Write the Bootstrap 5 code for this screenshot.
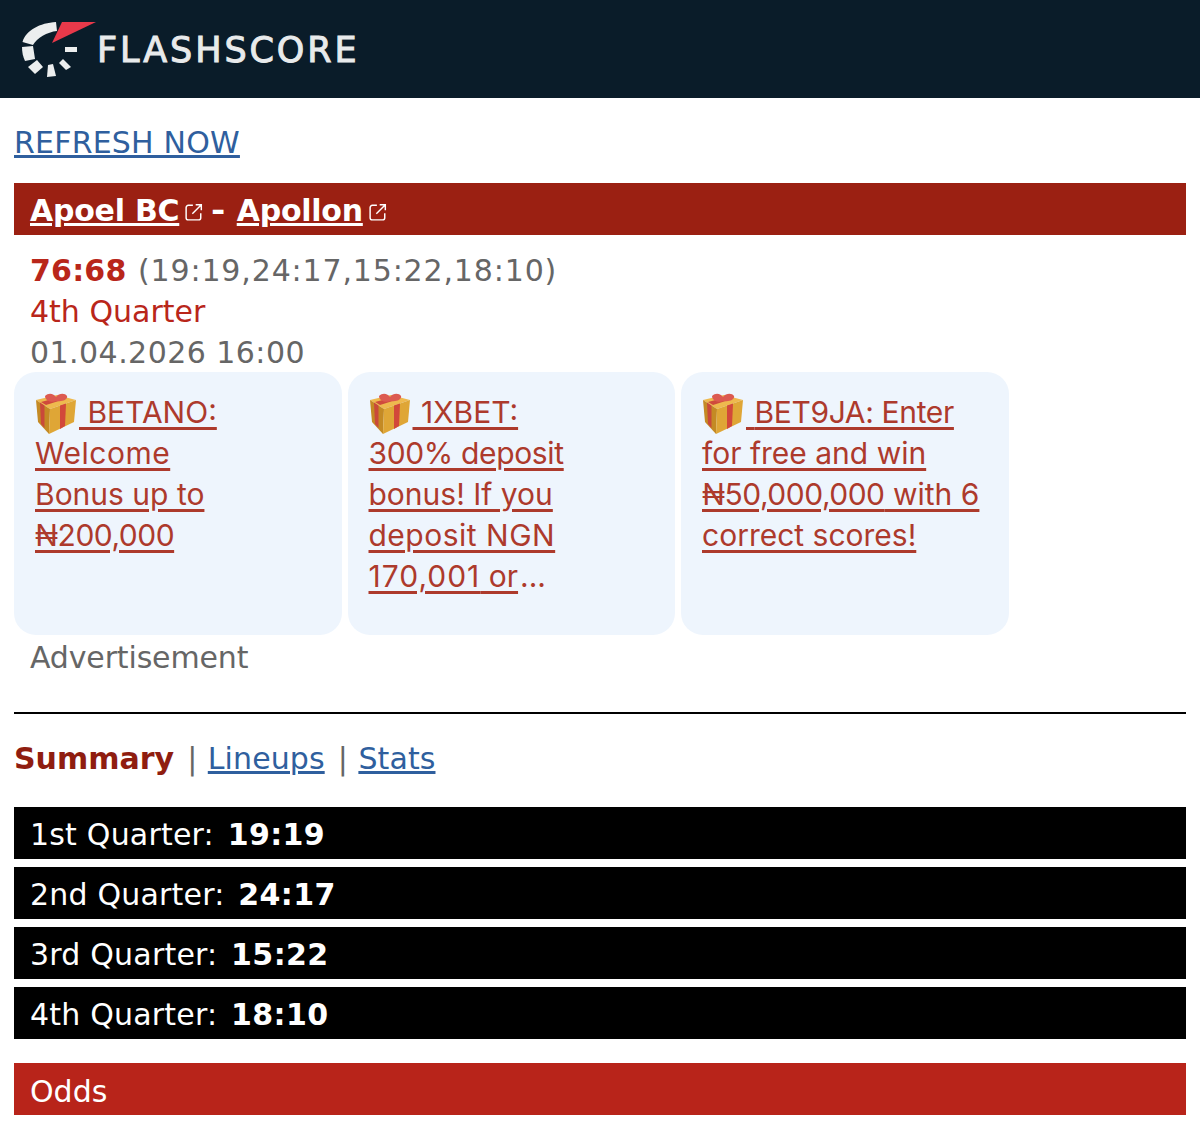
<!DOCTYPE html>
<html lang="en">
<head>
    <meta charset="UTF-8">
    <meta name="viewport" content="width=device-width, initial-scale=1.0">
    <title>Flashscore</title>
    <link href="https://cdn.jsdelivr.net/npm/bootstrap@5.3.0/dist/css/bootstrap.min.css" rel="stylesheet">
    <style>
      body {
        font-family: "DejaVu Sans", sans-serif;
        font-size: 30px;
        line-height: 41px;
        color: #666;
        background: #fff;
      }
      .top-head {
        height: 98px;
        background: #0a1c29;
        padding-left: 21px;
        gap: 1px;
      }
      .brand-word {
        font-family: "DejaVu Sans", sans-serif;
        font-size: 35px;
        line-height: 1;
        color: #e8eaeb;
        letter-spacing: 2.9px;
        -webkit-text-stroke: 1px #e8eaeb;
        margin-top: 3px;
      }
      .page-body { padding: 0 14px; }
      .refresh-line { padding-top: 24px; margin-bottom: 20px; letter-spacing: 0.2px; }
      .refresh-line a, .tab-line a { color: #2f5f9e; }
      .match-bar {
        height: 52px;
        background: #9b2012;
        color: #fff;
        font-weight: 700;
        padding: 2px 0 0 16px;
      }
      .match-bar a { color: #fff; letter-spacing: -0.25px; }
      .match-bar svg { margin: 0 9px 0 6px; }
      .match-dash { margin-right: 12px; transform: scaleX(1.15); }
      .score-block { padding: 15px 0 0 16px; margin-bottom: -1px; }
      .score-num { color: #b9261a; font-weight: 700; letter-spacing: 0.2px; }
      .score-sets { letter-spacing: 0.85px; margin-left: 2px; }
      .score-state { color: #b9261a; }
      .score-date { letter-spacing: 0.45px; }
      .promo-row { gap: 6px; }
      .promo-box {
        width: 327.5px;
        height: 262.5px;
        background: #eef5fd;
        border-radius: 22px;
        padding: 20px 21px;
        font-family: Inter, sans-serif;
      }
      .promo-box a { color: #ad3a2c; text-decoration-thickness: 2.5px; text-underline-offset: 4px; }
      .promo-box svg { margin: -10px 2px -9px 0; }
      .promo-num { letter-spacing: -0.5px; }
      .promo-wide { letter-spacing: 0.5px; }
      .promo-tight { letter-spacing: -0.35px; }
      .promo-tab { letter-spacing: 1px; }
      .promo-more { color: #ad3a2c; margin-left: 2px; }
      .ad-label { padding: 2px 0 0 16px; letter-spacing: -0.15px; }
      .black-rule { border-top: 2px solid #000; margin: 34px 0 24px; opacity: 1; }
      .tab-line { margin-bottom: 28px; }
      .tab-line a { letter-spacing: 0.1px; }
      .tab-sep { margin: 0 1px 0 3.5px; }
      .tab-current { color: #8f1d10; font-weight: 700; }
      .quarter-list { gap: 8px; }
      .quarter-row {
        height: 52px;
        background: #000;
        color: #fff;
        padding: 4px 0 0 16px;
      }
      .quarter-row span { letter-spacing: 0.2px; }
      .quarter-row strong { margin-left: 4px; letter-spacing: 0.4px; }
      .odds-bar {
        height: 52px;
        margin-top: 24px;
        background: #b8241a;
        color: #fff;
        padding: 6px 0 0 16px;
      }
    </style>
</head>
<body>

    <svg width="0" height="0" class="d-none">
      <symbol id="giftIcon" viewBox="0 0 42 42">
        <path d="M1 7 L22 2 L41 7 L15 16 Z" fill="#eeb94e"/>
        <path d="M1 7 L15 16 L14 41 L3 29 Z" fill="#c48a24"/>
        <path d="M15 16 L41 7 L39 29 L14 41 Z" fill="#dfa636"/>
        <path d="M5 9.500 L9.500 12.500 L9.500 35 L6 31 Z" fill="#c9493a"/>
        <path d="M25 12.500 L31 10.500 L30 33 L25 36 Z" fill="#d2483a"/>
        <path d="M6 9 L25 4 L30 6 L11 12 Z" fill="#cf4a3c"/>
        <path d="M10 3 C14 -1 19 1 21 4 C24 0 30 0 32 3 C33 7 27 9 22 8 C17 10 10 8 10 3 Z" fill="#dc5a50"/>
      </symbol>
      <symbol id="extIcon" viewBox="1 1 16 16">
        <path d="M8 3 H4 A2 2 0 0 0 2 5 V14 A2 2 0 0 0 4 16 H13 A2 2 0 0 0 15 14 V10" fill="none" stroke="currentColor" stroke-width="1.3"/>
        <path d="M7.500 10.500 L15.500 2.500 M10.500 2.500 H15.500 V7.500" fill="none" stroke="currentColor" stroke-width="1.3"/>
      </symbol>
    </svg>

    <header class="top-head d-flex align-items-center">
        <svg width="75" height="57" viewBox="0 0 75 57">
          <path d="M1.500 21 C5 9 19 2 35 1 L36 10 C26 11 16 17 12 24 Z" fill="#eceeee"/>
          <path d="M1 26 L12 25 L14 38 L4 40 C2 36 1 31 1 26 Z" fill="#eceeee"/>
          <path d="M7 46 L16 39 L22 46 L14 53 Z" fill="#eceeee"/>
          <path d="M27 44 L32 43 L35 55 L26 56 Z" fill="#eceeee"/>
          <path d="M38 42 L42 38 L50 46 L45 49 Z" fill="#eceeee"/>
          <rect x="44" y="26" width="12" height="5" fill="#eceeee"/>
          <path d="M31 22 L41 1 L75 1 Z" fill="#e8394a"/>
        </svg>
        <span class="brand-word">FLASHSCORE</span>
    </header>

    <div class="page-body">
        <div class="refresh-line"><a href="#">REFRESH NOW</a></div>

        <div class="match-bar d-flex align-items-center">
            <a href="#">Apoel BC</a><svg width="18" height="18" class="mt-1"><use href="#extIcon"/></svg><span class="match-dash">-</span><a href="#">Apollon</a><svg width="18" height="18" class="mt-1"><use href="#extIcon"/></svg>
        </div>

        <div class="score-block">
            <div><span class="score-num">76:68</span> <span class="score-sets">(19:19,24:17,15:22,18:10)</span></div>
            <div class="score-state">4th Quarter</div>
            <div class="score-date">01.04.2026 16:00</div>
        </div>

        <div class="promo-row d-flex">
            <div class="promo-box"><a href="#"><svg width="42" height="42"><use href="#giftIcon"/></svg> BETANO:<br><span class="promo-wide">Welcome</span><br>Bonus up to<br><span class="promo-num">₦200,000</span></a></div>
            <div class="promo-box"><a href="#"><svg width="42" height="42"><use href="#giftIcon"/></svg> 1XBET:<br><span class="promo-tight">300% deposit</span><br>bonus! If you<br><span class="promo-wide">deposit NGN</span><br><span class="promo-tab">170,001</span> or</a><span class="promo-more">...</span></div>
            <div class="promo-box"><a href="#"><svg width="42" height="42"><use href="#giftIcon"/></svg> <span class="promo-tight">BET9JA: Enter</span><br>for free and win<br><span class="promo-num">₦50,000,000</span> with 6<br>correct scores!</a></div>
        </div>
        <div class="ad-label">Advertisement</div>

        <hr class="black-rule">

        <div class="tab-line"><span class="tab-current">Summary</span> <span class="tab-sep">|</span> <a href="#">Lineups</a> <span class="tab-sep">|</span> <a href="#">Stats</a></div>

        <div class="quarter-list d-flex flex-column">
            <div class="quarter-row d-flex align-items-center"><span>1st Quarter:&nbsp;<strong>19:19</strong></span></div>
            <div class="quarter-row d-flex align-items-center"><span>2nd Quarter:&nbsp;<strong>24:17</strong></span></div>
            <div class="quarter-row d-flex align-items-center"><span>3rd Quarter:&nbsp;<strong>15:22</strong></span></div>
            <div class="quarter-row d-flex align-items-center"><span>4th Quarter:&nbsp;<strong>18:10</strong></span></div>
        </div>

        <div class="odds-bar d-flex align-items-center">Odds</div>
    </div>

<script src="https://cdn.jsdelivr.net/npm/bootstrap@5.3.0/dist/js/bootstrap.bundle.min.js"></script>
</body>
</html>
